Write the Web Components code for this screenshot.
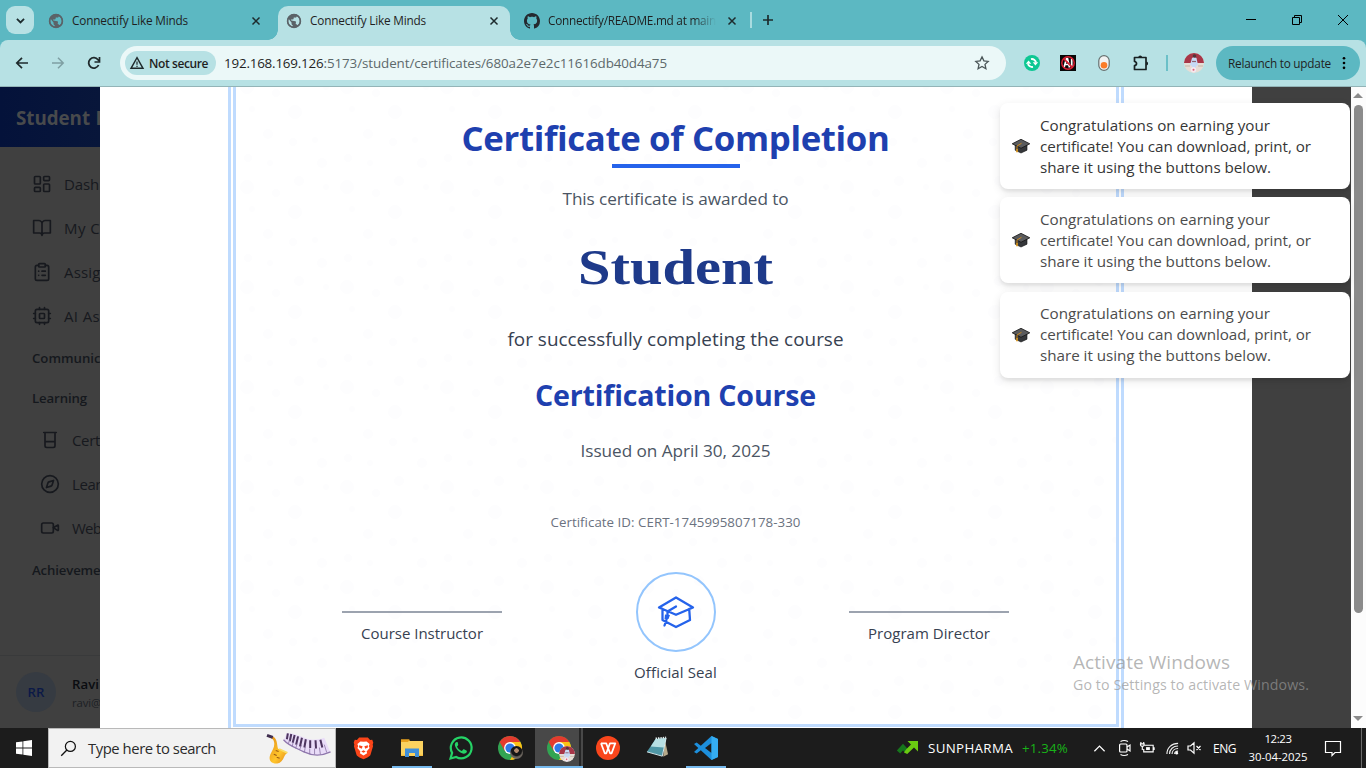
<!DOCTYPE html>
<html lang="en">
<head>
<meta charset="utf-8">
<title>Connectify Like Minds</title>
<style>
html,body{margin:0;padding:0;width:1366px;height:768px;overflow:hidden;font-family:"Open Sans","Noto Sans",sans-serif;color:#1f1f1f}
</style>
</head>
<body>
<desktop-screen></desktop-screen>
<script>
const ICONS = {
globe:['0.6 0.6 22.8 22.8','<path fill="#5b6368" d="M12 2C6.480 2 2 6.480 2 12s4.480 10 10 10 10-4.480 10-10S17.520 2 12 2zm-1 17.930c-3.950-.49-7-3.850-7-7.930 0-.62.080-1.210.21-1.790L9 15v1c0 1.100.9 2 2 2v1.930zm6.900-2.540c-.26-.81-1-1.390-1.900-1.390h-1v-3c0-.55-.45-1-1-1H8v-2h2c.55 0 1-.45 1-1V7h2c1.100 0 2-.9 2-2v-.41c2.930 1.190 5 4.060 5 7.410 0 2.080-.8 3.970-2.100 5.390z" transform="rotate(8 12 12)"/><circle cx="12" cy="12" r="9.300" fill="none" stroke="#5b6368" stroke-width="2"/>'],
close:['0 0 16 16','<path d="M4 4l8 8M12 4l-8 8" stroke="#1d2b2d" stroke-width="1.700"/>'],
chev:['0 0 16 16','<path d="M4.200 6.200L8 10l3.800-3.800" fill="none" stroke="#1d2b2d" stroke-width="1.900"/>'],
github:['0 0 16 16','<path fill="#24292f" d="M8 0C3.580 0 0 3.580 0 8c0 3.540 2.290 6.530 5.470 7.590.4.070.55-.17.55-.38 0-.19-.01-.82-.01-1.490-2.010.37-2.530-.49-2.690-.94-.09-.23-.48-.94-.82-1.130-.28-.15-.68-.52-.01-.53.63-.01 1.080.58 1.230.82.72 1.210 1.870.87 2.330.66.07-.52.28-.87.51-1.070-1.780-.2-3.640-.89-3.640-3.950 0-.87.31-1.590.82-2.150-.08-.2-.36-1.020.08-2.120 0 0 .67-.21 2.200.82.64-.18 1.320-.27 2-.27s1.360.09 2 .27c1.530-1.040 2.200-.82 2.200-.82.44 1.100.16 1.920.08 2.120.51.56.82 1.270.82 2.150 0 3.070-1.870 3.750-3.650 3.950.29.25.54.73.54 1.480 0 1.070-.01 1.930-.01 2.200 0 .21.15.46.55.38A8.010 8.010 0 0 0 16 8c0-4.420-3.580-8-8-8z"/>'],
plus:['0 0 16 16','<path d="M8 3v10M3 8h10" stroke="#1d2b2d" stroke-width="1.700"/>'],
min:['0 0 16 16','<path d="M3 7.500h10" stroke="#000"/>'],
restore:['0 0 16 16','<path d="M3.500 5.500h7v7h-7zM5.500 5.500v-2h7v7h-2" fill="none" stroke="#000"/>'],
winclose:['0 0 16 16','<path d="M3 3l10 10M13 3L3 13" stroke="#000"/>'],
back:['0 0 16 16','<path d="M14 8H3M8 2.800L2.800 8 8 13.200" fill="none" stroke="#1f2a2c" stroke-width="1.700"/>'],
forward:['0 0 16 16','<path d="M2 8h11M8 2.800L13.200 8 8 13.200" fill="none" stroke="#7f9fa3" stroke-width="1.500"/>'],
reload:['0 0 16 16','<path d="M12.600 10a5.200 5.200 0 1 1-.6-5.300L13.200 6" fill="none" stroke="#1f2a2c" stroke-width="1.800"/><path d="M13.500 2v5h-5" fill="none" stroke="#1f2a2c" stroke-width="1.700"/>'],
warn:['0 0 14 14','<path d="M7 1.700L13 12.300H1z" fill="none" stroke="#1f2a2c" stroke-width="1.400"/><path d="M7 5.500v3.200M7 9.700v1.300" stroke="#1f2a2c" stroke-width="1.200"/>'],
star:['0 0 16 16','<path d="M8 1.900l1.900 4 4.300.5-3.200 3 .9 4.300L8 11.500l-3.900 2.200.9-4.300-3.200-3 4.300-.5z" fill="none" stroke="#4a5557" stroke-width="1.300"/>'],
sync:['0 0 16 16','<circle cx="8" cy="8" r="8" fill="#0dc793"/><path d="M4 8.600a4.100 4.100 0 0 0 5 3.200M12 7.400a4.100 4.100 0 0 0-5-3.200" fill="none" stroke="#fff" stroke-width="1.900"/><path d="M1.800 8.800L4.600 5.600l2.600 3.200zM14.200 7.200l-2.800 3.200-2.600-3.200z" fill="#fff"/>'],
noai:['0 0 16 16','<path fill="#080808" d="M0 0h16v16H0z"/><path d="M4 12.500L6.500 3.500h1L9.500 12.500M5 9.500h4M11.700 3.500v9" fill="none" stroke="#fff" stroke-width="1.700"/><circle cx="8" cy="8" r="6.200" fill="none" stroke="#d81f33" stroke-width="1.500"/><path d="M3.600 3.600l8.800 8.800" stroke="#d81f33" stroke-width="1.600"/>'],
toggle:['0 0 16 16','<rect x="2.800" y=".6" width="10.400" height="14.800" rx="5.200" fill="#f2f2f2" stroke="#66706f" stroke-width="1.200"/><circle cx="8" cy="10.300" r="3.300" fill="#fb7b28"/>'],
puzzle:['0 0 18 18','<path d="M2.500 3.500H14v12H2.500v-3.800c2.700-.3 2.700-3.900 0-4.200z" fill="none" stroke="#182123" stroke-width="1.700" stroke-linejoin="round"/><path d="M6.300 3.300a1.900 1.900 0 0 1 3.800 0zM14.200 7.600a1.900 1.900 0 0 1 0 3.800z" fill="#182123"/>'],
avatar:['0 0 20 20','<circle cx="10" cy="10" r="10" fill="#e6ddd5"/><path d="M0 10a10 10 0 0 1 20 0z" fill="#a83648"/><path d="M8 5l2-1 2.500 1 1.500 7-2 1v6H8v-6l-2-1z" fill="#c7daf5"/><circle cx="10.500" cy="3" r="1.800" fill="#51373b"/><path d="M8 8.500h4" stroke="#8d6672" stroke-width="1.200"/><circle cx="9.500" cy="16.700" r="2.700" fill="#f6e9ee"/><circle cx="9.500" cy="16.700" r="1" fill="#df6078"/><path d="M1 13h5M14 13h5" stroke="#c5b5a7"/>'],
kebab:['0 0 16 16','<circle cx="8" cy="2.500" r="1.500"/><circle cx="8" cy="8" r="1.500"/><circle cx="8" cy="13.500" r="1.500"/>'],
dashboard:['0 0 24 24','<g class="l"><rect x="3" y="3" width="7" height="9" rx="1"/><rect x="14" y="3" width="7" height="5" rx="1"/><rect x="14" y="12" width="7" height="9" rx="1"/><rect x="3" y="16" width="7" height="5" rx="1"/></g>'],
book:['0 0 24 24','<g class="l"><path d="M2 3h6a4 4 0 0 1 4 4v14a3 3 0 0 0-3-3H2zM22 3h-6a4 4 0 0 0-4 4v14a3 3 0 0 1 3-3h7z"/></g>'],
clipboard:['0 0 24 24','<g class="l"><rect x="8" y="2" width="8" height="4" rx="1"/><path d="M16 4h2a2 2 0 0 1 2 2v14a2 2 0 0 1-2 2H6a2 2 0 0 1-2-2V6a2 2 0 0 1 2-2h2M12 11h4M12 16h4M8 11h.01M8 16h.01"/></g>'],
cpu:['0 0 24 24','<g class="l"><rect x="4" y="4" width="16" height="16" rx="2"/><rect x="9" y="9" width="6" height="6" rx="1"/><path d="M15 2v2M15 20v2M2 15h2M2 9h2M20 15h2M20 9h2M9 2v2M9 20v2"/></g>'],
beaker:['0 0 24 24','<g class="l"><path d="M4.500 3h15M6 3v16a2 2 0 0 0 2 2h8a2 2 0 0 0 2-2V3M6 14h12"/></g>'],
compass:['0 0 24 24','<g class="l"><circle cx="12" cy="12" r="10"/><path d="M16.240 7.760L14.500 13.200a2 2 0 0 1-1.300 1.300L7.760 16.240 9.500 10.800a2 2 0 0 1 1.300-1.300z"/></g>'],
video:['0 0 24 24','<g class="l"><rect x="2" y="6" width="14" height="12" rx="2"/><path d="M16 10.500l5 3.300a.6.600 0 0 0 1-.4V8a.6.600 0 0 0-1-.4l-5 3z" transform="translate(0 1)"/></g>'],
seal:['0 0 40 40','<g fill="none" stroke="#2563eb" stroke-width="2.300" stroke-linejoin="round" stroke-linecap="round"><path d="M20 5.500L37 15.500 20 22.800 3 15.500zM6.500 17v11L20 35l14-7 -.8-11M20 14.500L11.500 19.500v5L8.500 33.500"/></g><path d="M9 22.500l5 .5-1.500 4h-4z" fill="#2563eb"/>'],
cap:['0 0 18 14','<path d="M3.200 6v5.200L9 14l6-2.800V6z" fill="#35373a" stroke="#111" stroke-width=".6"/><path d="M9 .3L17.800 4.800 9 9.300.2 4.800z" fill="#5a5b5d" stroke="#151515" stroke-width=".8"/><path d="M9.500 4.300L5 7v4" fill="none" stroke="#d58b16" stroke-width=".9"/><path d="M4.300 10h1.500v3.200H4.100z" fill="#e09a1c"/>'],
windows:['0 0 16 16','<path fill="#fff" d="M0 2.300L6.500 1.400v6.200H0zM7.300 1.300L16 0v7.600H7.300zM0 8.400h6.500v6.200L0 13.700zM7.300 8.400H16V16l-8.700-1.300z"/>'],
search:['0 0 18 18','<circle cx="11" cy="6.800" r="5.300" fill="none" stroke="#111" stroke-width="1.300"/><path d="M7.300 10.600L1.300 16.600" stroke="#111" stroke-width="1.400"/>'],
music:['0 0 68 34','<defs><linearGradient id="sx" x1="0" x2="1" y1="0" y2="1"><stop offset="0" stop-color="#e18c16"/><stop offset=".6" stop-color="#ffc52b"/><stop offset="1" stop-color="#e08318"/></linearGradient></defs><path d="M4 4.500C8 4 10 8 10.500 13 11 17 11.500 18 12.500 17.500l8.500 4c-2.500 1.500-3 4-4.500 6.500C14 32.500 10 33 7 32.300 2.500 31 1.800 27 3.500 23 5.500 19 8.500 15 7.200 10 6.700 7.500 5 6.500 2 5.500z" fill="url(#sx)"/><path d="M0 3.400l6 2.200" stroke="#3f2d4f" stroke-width="3"/><path d="M9 19l3 1M7 23l3 1.300M10 26l3 1" stroke="#9b5b13" stroke-width="1.100"/><path d="M12.500 17.500l8.500 4" stroke="#f8dd65" stroke-width="1.800"/><path d="M20 1.500C30 .5 39 8 47 8c4 0 8-.5 12-2l6 14c-8 4.500-18 5-27 .500C30 17 23 14 17.500 8z" fill="#e9dcf8"/><path d="M17 8c6 7 15 9 21 12.500 9 4.300 19 4 27.500 0" fill="none" stroke="#8f77ad" stroke-width="1.300"/><path d="M21.500 1.500l-1 6M25 2l-1.500 7.500M28.500 3l-2 8M32 4.500l-2 8.500M36 6l-2 9M40 7.500l-1.500 8.500M44.500 8.500v8M50 8.500l.5 8.500M55 8l2 8" stroke="#4d355f" stroke-width="2.100"/><path d="M23.300 8l-1.300 4M27 10l-1 5M31 12l-1.500 5M35.500 13.500l-2 5M39.500 15l-1 6M44 17v6M49 17v6M54 16l1 7M59 13l2.500 8" stroke="#8770a0" stroke-width=".8"/>'],
brave:['0 0 24 26','<path d="M7 1h10l2.500 2.800 2.500-.3 1.200 3.500-.7 2 .4 2.200-3 9.800c-.5 1.500-4.500 3.500-7.900 5C8.600 24.500 4.600 22.500 4.100 21L1.100 11.200l.4-2.200-.7-2L2 3.500l2.500.3z" fill="#fb4519" transform="translate(0 -.5)"/><path d="M12 5.500l3.500-.5 3.500 3-1 2.500 1 2-3.500 4 .7 2L12 21l-4.200-2.500.7-2-3.500-4 1-2L5 8l3.500-3z" fill="#fff"/><path d="M7 9.500l4 1-1 3-3-1.500zM17 9.500l-4 1 1 3 3-1.500zM9.500 16.500L12 15l2.500 1.500L12 18z" fill="#fb4519"/>'],
folder:['0 0 22 20','<path d="M0 1.500h8l1.500 2H0z" fill="#e6a020"/><path d="M0 3h22v15H0z" fill="#fbd25f"/><path d="M0 1.500h8.500L7 4H0z" fill="#e9a11d"/><path d="M4 19v-8.500h14V19h-4v-4H8v4z" fill="#3f8fda"/><path d="M0 16.800h4V18H0zM18 16.800h4V18h-4z" fill="#f4bd3e"/>'],
whatsapp:['0 0 24 24','<path d="M1.500 22.500l1.600-5.600A10.400 10.400 0 1 1 7.200 21z" fill="#1b1c1c" stroke="#25d366" stroke-width="2.200"/><path d="M8.800 6.600c-.3-.7-.5-.7-1-.7-1 .1-2 1.200-2 2.700 0 3 4.600 9 8.900 9.200 1.800 0 3.200-1.300 3.200-2.600 0-.4-.2-.6-.6-.8l-2.300-1.100c-.4-.2-.7-.1-.9.200l-1 1.200c-.2.300-.5.300-.9.100-1.900-.9-3-2-4-3.800-.2-.4-.1-.6.100-.8l.8-1c.2-.3.200-.5.100-.8z" fill="#25d366"/>'],
chrome:['0 0 24 24','<circle cx="12" cy="12" r="12" fill="#32a452"/><path d="M1.600 6A12 12 0 0 1 22.400 6H12z" fill="#e33b2e"/><path d="M22.400 6A12 12 0 0 1 12 24l5.200-9L12 6z" fill="#fbc116"/><path d="M1.600 6L7 15.200 12 6z" fill="#e33b2e"/><circle cx="12" cy="12" r="5.900" fill="#fff"/><circle cx="12" cy="12" r="4.600" fill="#2f79e8"/>'],
wps:['0 0 24 24','<circle cx="12" cy="12" r="12" fill="#f9461c"/><path d="M5 7.300h5.200l1.800 5M5 7.300l3.800 10h1.500L14 7.300h5.300l-3.700 10h-1.500L11.500 10.500" fill="none" stroke="#fff" stroke-width="1.800" stroke-linejoin="round"/>'],
notepad:['0 0 24 22','<path d="M19.500 2l3.500 16-5 2.500z" fill="#b7a98a"/><path d="M10 2l11-1-4 18.500L1 15.500z" fill="#4f97a6"/><path d="M10 2l11-1-2.500 10L5 10z" fill="#b7dfe3"/><path d="M10 1.500l11-1" stroke="#e6efef" stroke-width="1.800" stroke-dasharray="1.500 1"/><path d="M1 15.500l16 4.500 4-19" fill="none" stroke="#d9eef2"/>'],
vscode:['0 0 24 24','<path d="M17.500 0L24 3v18l-6.500 3L6.800 14.300 2.700 17.500 0 16 4.300 12 0 8l2.700-1.500 4.100 3.200z" fill="#1d8fdc"/><path d="M17.500 7v10L11 12z" fill="#1b1c1c"/><path d="M17.500 0L24 3v18l-6.500 3z" fill="#35adf2"/>'],
stock:['0 0 22 14','<path d="M1.500 11L6 6l4 4.500" fill="none" stroke="#16761c" stroke-width="4.500"/><path d="M7 11.500l3.200 1.500L17 6.500l4 4V0H10.500L14 3.500 9 8.500z" fill="#6acb11"/>'],
up:['0 0 14 14','<path d="M1.500 10L7 4.500 12.500 10" fill="none" stroke="#fff" stroke-width="1.300"/>'],
camera:['0 0 14 18','<g fill="none" stroke="#fff" stroke-width="1.200"><rect x="1.600" y="5" width="7.400" height="8" rx="1"/><path d="M9 8l3-2v6l-3-2M2.500 2.500Q6 .5 10 2.500M2.500 15.500Q6 17.500 10 15.500"/></g>'],
battery:['0 0 18 14','<path d="M5.500 4.500h9.500v7H5v-3M16 6.500v3" fill="none" stroke="#fff" stroke-width="1.200"/><path d="M7.500 6.500h4v3h-4z" fill="#fff"/><path d="M1 3h5M2 3V1M5 3V1M1.500 3.500c0 3 4 3 4 0M3.500 5.500v4" fill="none" stroke="#fff" stroke-width="1.200"/>'],
wifi:['0 0 14 14','<g fill="none" stroke="#eee" stroke-width="1.200"><path d="M1 13C1 6 6 1.500 13 1.500M3.800 13c0-5.200 4-8.700 9.200-8.700M6.500 13C6.500 9.600 9 7 13 7M9.300 13c0-2 1.400-3.200 3.700-3.200"/></g><circle cx="11.500" cy="12" r="1.500" fill="#fff"/>'],
mute:['0 0 16 14','<path d="M1 5h2.500L7 1.800v10.400L3.500 9H1zM9.500 5l4 4M13.500 5l-4 4" fill="none" stroke="#fff" stroke-width="1.200"/>'],
note:['0 0 18 18','<path d="M1.500 2.500h15v11H11l-3 3v-3H1.500z" fill="none" stroke="#fff" stroke-width="1.200"/>']
};
function define(name, html, after){
  customElements.define(name, class extends HTMLElement{
    constructor(){super();this.attachShadow({mode:'open'});}
    connectedCallback(){
      if(this.ready) return; this.ready = true;
      this.shadowRoot.innerHTML = typeof html==='function' ? html(this) : html;
      if(after) after(this);
    }
  });
}
define('ui-icon', el=>{
  const [vb,body]=ICONS[el.getAttribute('name')];
  const w=+(el.getAttribute('w')||16), p=vb.split(' '), h=+(el.getAttribute('h')||w*p[3]/p[2]);
  return `<style>:host{display:block;flex:none;width:${w}px;height:${h}px}svg{display:block;overflow:visible}.l{fill:none;stroke:currentColor;stroke-width:2;stroke-linecap:round;stroke-linejoin:round}</style><svg width="${w}" height="${h}" viewBox="${vb}">${body}</svg>`;
});
define('browser-tab', el=>`<style>
:host{display:flex;position:relative;align-items:center;width:232px;height:34px;margin-top:6px;box-sizing:border-box;padding:0 8px 5px;gap:8px;border-radius:10px 10px 0 0;flex:none}
:host([active]){background:#b7e1e4}
:host([active])::before,:host([active])::after{content:"";position:absolute;bottom:0;width:10px;height:10px}
:host([active])::before{left:-10px;background:radial-gradient(circle at 0 0,transparent 9.500px,#b7e1e4 10px)}
:host([active])::after{right:-10px;background:radial-gradient(circle at 100% 0,transparent 9.500px,#b7e1e4 10px)}
.t{width:168px;height:21px;overflow:hidden;font-size:11.800px;line-height:20px}
:host([fade]) .t{-webkit-mask-image:linear-gradient(90deg,#000 146px,transparent 168px)}
</style><ui-icon name="${el.getAttribute('icon')}" w="16"></ui-icon><div class="t"><slot></slot></div><ui-icon name="close" w="14" style="margin-left:1px"></ui-icon>`);
define('tab-strip', `<style>
:host{display:flex;height:40px;background:#5cb8c2;padding-left:6px;gap:6px;box-sizing:border-box}
.b{width:28px;height:28px;margin-top:6px;border-radius:9px;background:#b7e1e4;display:grid;place-items:center}
.s{width:2px;height:16px;background:#a9dce0;margin:12px 0 0 -4px;}
.w{display:flex;margin-left:auto;gap:30px;padding:12px 15px 0 0}
</style><div class="b"><ui-icon name="chev" w="15"></ui-icon></div>
<browser-tab icon="globe"><ui-text w="116">Connectify Like Minds</ui-text></browser-tab>
<browser-tab icon="globe" active><ui-text w="116">Connectify Like Minds</ui-text></browser-tab>
<browser-tab icon="github" fade><ui-text w="168">Connectify/README.md at main</ui-text></browser-tab>
<div class="s"></div><ui-icon name="plus" w="16" style="margin:12px 0 0 2px"></ui-icon>
<div class="w"><ui-icon name="min"></ui-icon><ui-icon name="restore"></ui-icon><ui-icon name="winclose"></ui-icon></div>`);
define('browser-toolbar', `<style>
:host{display:block;background:#5cb8c2;height:47px}
.bar{display:flex;align-items:center;height:46px;background:#b7e1e4;border-bottom:1px solid #93b4b7;border-radius:8px 8px 0 0;padding-left:14px}
.nav{display:flex;gap:20px;width:106px;flex:none}
.omni{display:flex;align-items:center;width:886px;height:34px;border-radius:17px;background:#ebf8f8;box-sizing:border-box;padding:0 16px 0 5px;flex:none}
.chip{display:flex;align-items:center;height:24px;width:91px;border-radius:12px;background:#b7e1e4;box-sizing:border-box;padding-left:5px;gap:5px;font-size:12px;font-weight:600;margin-right:8px}
.url{display:flex;font-size:13.400px;line-height:22px;color:#5d696b}.host{color:#1f1f1f}
.ext{display:flex;align-items:center;gap:20px;margin-left:18px;flex:none}
.sep{width:2px;height:16px;background:#6bc0c8;margin:0 16px 0 16px}
.up{display:flex;align-items:center;width:144px;height:34px;border-radius:17px;background:#5cb8c2;margin-left:12px;box-sizing:border-box;padding-left:12px;font-size:11.800px;flex:none}
</style><div class="bar"><div class="nav"><ui-icon name="back"></ui-icon><ui-icon name="forward"></ui-icon><ui-icon name="reload"></ui-icon></div>
<div class="omni"><div class="chip"><ui-icon name="warn" w="14"></ui-icon><ui-text w="59">Not secure</ui-text></div>
<div class="url"><ui-text class="host" w="99.500">192.168.169.126</ui-text><ui-text w="343.500">:5173/student/certificates/680a2e7e2c11616db40d4a75</ui-text></div>
<ui-icon name="star" w="16" style="margin-left:auto"></ui-icon></div>
<div class="ext"><ui-icon name="sync"></ui-icon><ui-icon name="noai"></ui-icon><ui-icon name="toggle"></ui-icon><ui-icon name="puzzle" w="18"></ui-icon></div>
<div class="sep"></div><ui-icon name="avatar" w="20"></ui-icon>
<div class="up"><ui-text w="103">Relaunch to update</ui-text><ui-icon name="kebab" w="14" style="margin-left:6px"></ui-icon></div></div>`);
define('nav-item', el=>`<style>:host{display:flex;align-items:center;height:44px;gap:12px;padding-left:32px;font-size:15px;color:#17191e;white-space:nowrap}:host([sub]){padding-left:40px}</style><ui-icon name="${el.getAttribute('icon')}" w="20"></ui-icon><slot></slot>`);
define('side-nav', `<style>
:host{display:block;width:100px;height:641px;background:#404040;overflow:hidden;flex:none}
header{height:60px;background:linear-gradient(90deg,#04123a,#08163a);color:#484a4c;font-weight:700;font-size:18.800px;line-height:62px;padding-left:16px;white-space:nowrap}
nav{height:509px;padding-top:15px;box-sizing:border-box;border-bottom:1px solid #393a3b}
h3{margin:0;height:40px;line-height:40px;padding-left:32px;font-size:13.200px;font-weight:600;color:#15181d;white-space:nowrap}
footer{display:flex;align-items:center;padding:16px 0 0 16px;gap:16px}
.av{width:40px;height:40px;border-radius:50%;background:#363b42;color:#0b1947;font-weight:600;font-size:13.200px;display:grid;place-items:center;flex:none}
.who{white-space:nowrap;margin-top:2px}.n{font-size:13.200px;font-weight:600;line-height:20px;color:#0a0c10}.e{font-size:11.300px;line-height:18px;color:#1c1f24}
</style><header><ui-text w="74">Student </ui-text><span style="margin-left:5.500px">P</span></header>
<nav><nav-item icon="dashboard"><ui-text w="35">Dash</ui-text></nav-item><nav-item icon="book"><ui-text w="36">My C</ui-text></nav-item><nav-item icon="clipboard"><ui-text w="36.500">Assig</ui-text></nav-item><nav-item icon="cpu"><ui-text w="36">AI As</ui-text></nav-item>
<h3><ui-text w="68.500">Communic</ui-text></h3><h3><ui-text w="55">Learning</ui-text></h3>
<nav-item sub icon="beaker"><ui-text w="28">Cert</ui-text></nav-item><nav-item sub icon="compass"><ui-text w="29">Lear</ui-text></nav-item><nav-item sub icon="video"><ui-text w="29">Web</ui-text></nav-item>
<h3><ui-text w="68.500">Achieveme</ui-text></h3></nav>
<footer><div class="av">RR</div><div class="who"><div class="n"><ui-text w="27">Ravi</ui-text></div><div class="e"><ui-text w="29">ravi@</ui-text></div></div></footer>`);
define('completion-certificate', `<style>
:host{display:block;width:1152px;height:641px;background:#fff;overflow:hidden;flex:none}
.sheet{position:relative;width:896px;height:645px;margin-left:128px;box-sizing:border-box;border:8px double #bfdbfe;border-top:0;text-align:center;display:flex;flex-direction:column;align-items:center;isolation:isolate}
.bg{position:absolute;inset:0;z-index:-1;width:100%;height:100%}
.sheet>ui-text{margin-right:1px}
.title{margin-top:31px;line-height:40px;font-size:34.800px;font-weight:700;color:#1e40af}
.rule{width:128px;height:4px;background:#2563eb;margin-top:6px}
.sub{line-height:28px;font-size:17.200px;color:#4b5563;margin-top:17px}
.name{font:700 51.500px/48px "Liberation Serif",serif;color:#1e3a8a;margin-top:30px}
.for{line-height:28px;font-size:18.900px;color:#374151;margin-top:34px}
.course{line-height:36px;font-size:28.600px;font-weight:700;color:#1e40af;margin-top:24px}
.date{line-height:28px;font-size:17.200px;color:#4b5563;margin-top:24px}
.id{line-height:20px;font-size:13.300px;color:#6b7280;margin-top:47px}
.signs{display:flex;justify-content:space-between;width:667px;margin:40px 1px 0 0;font-size:15px;line-height:24px;color:#374151}
.sig{width:160px;margin-top:39px;border-top:2px solid #9ca3af;padding-top:8px}
.seal{width:160px;display:flex;flex-direction:column;align-items:center}
.ring{width:76px;height:76px;border:2px solid #93c5fd;border-radius:50%;display:grid;place-items:center;margin-bottom:8px}
</style><div class="sheet"><svg class="bg"><defs><pattern id="p" width="100" height="100" patternUnits="userSpaceOnUse" y="89"><g fill="#fdfdfe"><circle cx="11" cy="11" r="7"/><circle cx="59" cy="36" r="7"/><circle cx="16" cy="33" r="3"/><circle cx="79" cy="64" r="3"/><circle cx="34" cy="87" r="3"/><circle cx="90" cy="11" r="3"/><circle cx="12" cy="82" r="4"/><circle cx="40" cy="17" r="4"/><circle cx="63" cy="5" r="5"/><circle cx="57" cy="66" r="4"/><circle cx="86" cy="87" r="5"/><circle cx="32" cy="58" r="5"/></g></pattern></defs><rect width="100%" height="100%" fill="url(#p)"/></svg>
<ui-text class="title" w="428">Certificate of Completion</ui-text><div class="rule"></div>
<ui-text class="sub" w="226">This certificate is awarded to</ui-text>
<ui-text class="name" w="195" stretch>Student</ui-text>
<ui-text class="for" w="336">for successfully completing the course</ui-text>
<ui-text class="course" w="281">Certification Course</ui-text>
<ui-text class="date" w="190">Issued on April 30, 2025</ui-text>
<ui-text class="id" w="250">Certificate ID: CERT-1745995807178-330</ui-text>
<div class="signs"><div class="sig"><ui-text w="122">Course Instructor</ui-text></div><div class="seal"><div class="ring"><ui-icon name="seal" w="40"></ui-icon></div><ui-text w="83">Official Seal</ui-text></div><div class="sig"><ui-text w="122">Program Director</ui-text></div></div></div>`);
define('toast-card', el=>`<style>
:host{display:flex;align-items:center;width:350px;height:86px;box-sizing:border-box;background:#fff;border-radius:8px;padding-left:12px;gap:10px;color:#363636;font-size:15.200px;line-height:21px;box-shadow:0 3px 10px rgba(0,0,0,.1),0 3px 3px rgba(0,0,0,.05)}
:host([old]){color:#4c4c4c}
ui-text{display:block}</style><ui-icon name="cap" w="18"></ui-icon><div><ui-text w="230">Congratulations on earning your</ui-text><ui-text w="271">certificate! You can download, print, or</ui-text><ui-text w="231">share it using the buttons below.</ui-text></div>`);
define('toast-stack', `<style>:host{position:absolute;left:1000px;top:16px;display:flex;flex-direction:column;gap:8.450px}</style><toast-card></toast-card><toast-card old></toast-card><toast-card old></toast-card>`);
define('activation-note', `<style>:host{position:absolute;left:1073px;top:563px;color:rgba(150,150,150,.7);white-space:nowrap}.a{font-size:19px;line-height:24px}.b{font-size:14.200px;line-height:22px}</style><div class="a"><ui-text w="157">Activate Windows</ui-text></div><div class="b"><ui-text w="236">Go to Settings to activate Windows.</ui-text></div>`);
define('scroll-bar', `<style>:host{display:flex;flex-direction:column;align-items:center;width:15px;height:641px;background:#fcfcfc;box-sizing:border-box;padding:6px 1px 7px 0;flex:none}
i{border:5px solid transparent;border-top:0;border-bottom:5px solid #8b8b8b}.t{width:9px;height:508px;border-radius:5px;background:#8b8b8b;margin:7px 0 auto}i.d{border-bottom:0;border-top:5px solid #8b8b8b}</style><i></i><div class="t"></div><i class="d"></i>`);
define('web-page', `<style>:host{display:flex;position:relative;height:641px;overflow:hidden;background:#404040}scroll-bar{margin-left:auto}</style><side-nav></side-nav><completion-certificate></completion-certificate><scroll-bar></scroll-bar><toast-stack></toast-stack><activation-note></activation-note>`);
define('task-app', el=>`<style>:host{display:grid;place-items:center;position:relative;width:48px;height:40px;box-sizing:border-box;flex:none}
:host([open])::after{content:"";position:absolute;left:4px;right:4px;bottom:0;height:2px;background:#76b9ed}
:host([active]){background:linear-gradient(90deg,#484848 44.500px,#252525 44.500px 46px,#484848 46px)}
:host([active])::after{left:0;right:0}
.p{position:absolute;left:24px;top:18px;width:13px;height:13px;border-radius:50%;overflow:hidden}
.dark{background:radial-gradient(circle at 50% 35%,#b38a6c 0 2px,#171717 2.500px 5px,#6b655e 6.500px)}
</style><ui-icon name="${el.getAttribute('icon')}" w="${el.getAttribute('w')||24}"></ui-icon>${el.getAttribute('person')==='a'?'<div class="p dark"></div>':''}${el.getAttribute('person')==='b'?'<div class="p" style="width:16px;height:16px"><ui-icon name="avatar" w="16"></ui-icon></div>':''}`);
define('task-bar', `<style>
:host{display:flex;height:40px;background:#1c1c1c;color:#fff}
.start{width:48px;display:grid;place-items:center}
.find{display:flex;align-items:center;width:288px;height:40px;box-sizing:border-box;border:1px solid #b9b9b9;background:#f2f2f2;color:#2b2b2b;font-size:14.800px;padding-left:11px;gap:11px}
.apps{display:flex;padding-left:3px;gap:1px}
.tray{display:flex;align-items:center;margin-left:auto;font-size:13.300px}
.time{display:flex;flex-direction:column;align-items:center;font-size:11.400px;line-height:18px;width:60px}
</style><div class="start"><ui-icon name="windows" w="16"></ui-icon></div>
<div class="find"><ui-icon name="search" w="17"></ui-icon><ui-text w="128">Type here to search</ui-text><ui-icon name="music" w="66" style="margin-left:39.500px"></ui-icon></div>
<div class="apps"><task-app icon="brave" w="21"></task-app><task-app icon="folder" w="22" open></task-app><task-app icon="whatsapp"></task-app><task-app icon="chrome" person="a"></task-app><task-app icon="chrome" person="b" open active></task-app><task-app icon="wps"></task-app><task-app icon="notepad" w="23"></task-app><task-app icon="vscode" open></task-app></div>
<div class="tray"><ui-icon name="stock" w="22"></ui-icon><ui-text w="85" style="margin-left:9px">SUNPHARMA</ui-text><ui-text w="46" style="margin-left:9px;color:#18b318">+1.34%</ui-text>
<ui-icon name="up" w="13" style="margin-left:25px"></ui-icon><ui-icon name="camera" w="14" style="margin-left:12px"></ui-icon><ui-icon name="battery" w="17" style="margin-left:7px"></ui-icon><ui-icon name="wifi" w="13" style="margin-left:10px"></ui-icon><ui-icon name="mute" w="16" style="margin-left:8px"></ui-icon><ui-text w="23" style="margin-left:10px;font-size:12px">ENG</ui-text>
<div class="time" style="margin-left:12px"><ui-text w="27">12:23</ui-text><ui-text w="59">30-04-2025</ui-text></div><ui-icon name="note" w="18" style="margin:0 19px 0 16px"></ui-icon><span style="width:1px;height:40px;background:#6a6a6a;margin-right:4px"></span></div>`);
define('desktop-screen', `<style>:host{display:block;width:1366px;height:768px;overflow:hidden}</style><tab-strip></tab-strip><browser-toolbar></browser-toolbar><web-page></web-page><task-bar></task-bar>`);
/* Sets a run of text to an exact advance width, by tracking or by horizontal stretch. */
define('ui-text', el=>`<style>:host{display:inline-block;width:${el.getAttribute('w')}px;white-space:nowrap;text-align:left;flex:none}span{display:inline-block;transform-origin:0 50%;font-variant-ligatures:none;font-kerning:normal}</style><span><slot></slot></span>`,
 el=>{
  const s=el.shadowRoot.querySelector('span'), w=+el.getAttribute('w'), nat=s.getBoundingClientRect().width;
  if(el.hasAttribute('stretch')) s.style.transform='scaleX('+w/nat+')';
  else s.style.letterSpacing=(w-nat)/el.textContent.trim().length+'px';
 });
</script>
</body>
</html>
